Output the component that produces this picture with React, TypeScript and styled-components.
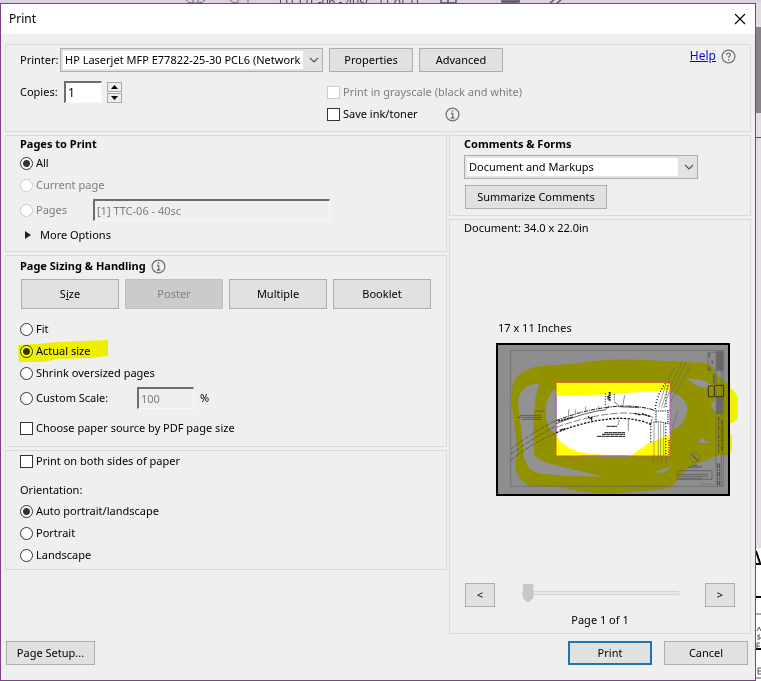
import React from "react";
import styled, { createGlobalStyle, css } from "styled-components";

const GlobalStyle = createGlobalStyle`
  * { box-sizing: border-box; }
  body {
    margin: 0;
    background: #e6dfe8;
    color: #000;
    font: 11px/16px "Noto Sans", "Open Sans", sans-serif;
  }
  button, input, select { font: inherit; color: inherit; margin: 0; }
`;

const Screen = styled.div`
  display: grid;
  grid-template-columns: minmax(0, 1fr) 5px;
  grid-template-rows: 3px auto;
  min-height: 100vh;
  overflow: hidden;
`;
const AppStrip = styled.div`
  grid-column: 1 / -1;
  display: flex;
  align-items: center;
  height: 3px;
  overflow: hidden;
  background: #ddd0e2;
  color: #554a5a;
  svg { flex: 1; min-width: 0; height: 3px; }
`;
const StripTitle = styled.span`
  font-size: 12px;
  white-space: nowrap;
`;
const StripLeft = styled.svg`max-width: 279px;`;
const AppEdge = styled.svg`
  width: 5px;
  height: 678px;
`;
const Dialog = styled.main`
  display: flex;
  flex-direction: column;
  border: 1px solid #7b4285;
  background: #efefef;
  min-height: 678px;
`;
const TitleBar = styled.header`
  display: flex;
  align-items: center;
  justify-content: space-between;
  height: 30px;
  padding: 0 8px;
  background: #fff;
`;
const Title = styled.h1`
  margin: 0;
  font-size: 12px;
  font-weight: 400;
`;
const CloseButton = styled.button`
  display: flex;
  align-items: center;
  justify-content: center;
  width: 14px;
  height: 14px;
  padding: 0;
  border: 0;
  background: none;
`;
const Body = styled.form`
  flex: 1;
  display: flex;
  flex-direction: column;
  gap: 3px;
  padding: 10px 3px 0;
  border-left: 1px solid #f6e6f8;
  border-right: 1px solid #f6e6f8;
`;
const Columns = styled.div`
  flex: 1;
  display: grid;
  grid-template-columns: minmax(0, 442fr) minmax(0, 302fr);
  gap: 2px;
`;
const Column = styled.div`
  display: flex;
  flex-direction: column;
  gap: 3px;
`;
const Group = styled.section<{ $bottom?: number; $grow?: boolean }>`
  display: flex;
  flex-direction: column;
  border: 1px solid #dadada;
  padding: 0 14px ${(p) => p.$bottom ?? 0}px;
  ${(p) => p.$grow && css`flex: 1;`}
`;
const Heading = styled.h2<{ $tall?: boolean }>`
  display: flex;
  align-items: center;
  gap: 5px;
  margin: 0;
  height: ${(p) => (p.$tall ? 20 : 16)}px;
  font-size: 11px;
  font-weight: 700;
`;
const PrinterRow = styled.div`
  display: flex;
  align-items: center;
  gap: 6px;
  padding-top: 3px;
`;
const HelpArea = styled.div`
  display: flex;
  align-items: center;
  gap: 5px;
  margin-left: auto;
  height: 16px;
  align-self: flex-start;
`;
const HelpLink = styled.a`
  color: #0a0ac0;
  font-size: 12px;
`;
const OptionsRow = styled.div`
  display: grid;
  grid-template-columns: 301px minmax(0, 1fr);
  padding: 9px 6px 6px 0;
`;
const CopiesRow = styled.div`
  display: flex;
  align-items: center;
  gap: 5px;
  height: 22px;
`;
const FieldLabel = styled.label`width: 39px; white-space: nowrap;`;
const Spinner = styled.div`
  display: grid;
  gap: 1px;
  width: 15px;
`;
const SpinButton = styled.button`
  display: flex;
  align-items: center;
  justify-content: center;
  height: 10px;
  padding: 0;
  border: 1px solid #a9a9a9;
  background: #ececec;
`;
const Row = styled.div<{ $size?: "short" | "tall" }>`
  position: relative;
  display: flex;
  align-items: center;
  height: ${(p) => (p.$size === "tall" ? 28 : p.$size === "short" ? 20 : 22)}px;
`;
const Choice = styled.label<{ $disabled?: boolean; $width?: number }>`
  display: flex;
  align-items: center;
  gap: 3px;
  white-space: nowrap;
  ${(p) => p.$width && css`width: ${p.$width}px;`}
  ${(p) => p.$disabled && css`color: #7d7d7d;`}
`;
const IndentedChoice = styled(Choice)`margin-left: 6px;`;
const Radio = styled.input.attrs({ type: "radio" })`
  appearance: none;
  flex: none;
  width: 13px;
  height: 13px;
  border: 1px solid #333;
  border-radius: 50%;
  background: #fff;
  &:checked { background: radial-gradient(circle, #333 0 3px, #fff 4px); }
  &:disabled { border-color: #ccc; }
`;
const Check = styled.input.attrs({ type: "checkbox" })`
  appearance: none;
  flex: none;
  width: 13px;
  height: 13px;
  border: 1px solid #333;
  background: #fff;
  &:checked { background: #333; }
  &:disabled { border-color: #ccc; }
`;
const TextBox = styled.input<{ $width: number }>`
  width: ${(p) => p.$width}px;
  height: 22px;
  padding: 0 2px 1px;
  border: 1px solid #f8f8f8;
  border-top: 2px solid #6d6d6d;
  border-left: 2px solid #6d6d6d;
  border-radius: 0;
  background: #fff;
  font-size: 12px;
  &:disabled { background: #efefef; color: #7d7d7d; font-size: 11px; }
`;
const Unit = styled.span`padding-left: 6px;`;
const Button = styled.button<{ $width: number; $height?: number; $primary?: boolean }>`
  width: ${(p) => p.$width}px;
  height: ${(p) => p.$height ?? 24}px;
  padding: 0;
  border: 1px solid #adadad;
  background: #e1e1e1;
  white-space: nowrap;
  ${(p) => p.$primary && css`border: 2px solid #1f74b3;`}
  &:disabled { background: #cbcbcb; border-color: #bfbfbf; color: #808080; }
`;
const SummarizeButton = styled(Button)`margin-left: 1px;`;
const SelectBox = styled.div<{ $width: number }>`
  position: relative;
  width: ${(p) => p.$width}px;
  height: 24px;
  svg { position: absolute; right: 4px; top: 9px; pointer-events: none; }
`;
const Select = styled.select`
  appearance: none;
  width: 100%;
  height: 24px;
  padding: 2px 19px 2px 2px;
  border: 1px solid #adadad;
  border-radius: 0;
  background: linear-gradient(#fff, #fff) content-box, #e3e3e3;
  text-indent: 2px;
`;
const PrinterSelect = styled(SelectBox)`margin-left: -5px;`;
const CommentTools = styled.div`
  display: flex;
  flex-direction: column;
  gap: 6px;
  padding-top: 3px;
`;
const Disclosure = styled.button`
  display: flex;
  align-items: center;
  gap: 9px;
  padding: 0 0 0 5px;
  border: 0;
  background: none;
`;
const SizeTabs = styled.div`
  display: flex;
  gap: 6px;
  padding: 3px 1px 9px;
`;
const SourceRow = styled(Row)`margin-top: 5px;`;
const OrientationLabel = styled(Row)`margin-top: 9px;`;
const Highlight = styled.svg`
  position: absolute;
  left: -2px;
  top: 0;
  mix-blend-mode: multiply;
  pointer-events: none;
`;
const Preview = styled.figure`
  display: flex;
  flex-direction: column;
  gap: 7px;
  margin: auto 0;
  padding: 0 20px 4px 32px;
  figcaption { padding-left: 2px; }
  svg { display: block; width: 234px; height: 153px; overflow: visible; }
`;
const Pager = styled.div`
  display: flex;
  align-items: center;
  justify-content: space-between;
  padding: 0 1px;
`;
const Slider = styled.input.attrs({ type: "range" })`
  appearance: none;
  width: 157px;
  height: 20px;
  margin: 0 0 4px;
  background: none;
  &::-webkit-slider-runnable-track {
    height: 4px;
    border: 1px solid #d3d3d3;
    background: #e9e9e9;
  }
  &::-webkit-slider-thumb {
    appearance: none;
    width: 11px;
    height: 19px;
    margin-top: -8px;
    background: #c8c8c8;
    clip-path: polygon(0 0, 100% 0, 100% 72%, 50% 100%, 0 72%);
  }
`;
const PageCount = styled.p`
  margin: 5px 0;
  text-align: center;
`;
const Footer = styled.footer`
  display: flex;
  gap: 12px;
  padding: 4px 3px 15px 1px;
`;
const Spacer = styled.span`flex: 1;`;

const Chevron = () => (
  <svg width="10" height="7" viewBox="0 0 10 7" fill="none" stroke="#555" strokeWidth="1.2"><path d="M1 1l4 4 4-4" /></svg>
);
const InfoIcon = () => (
  <svg width="15" height="15" viewBox="0 0 15 15" fill="none" stroke="#747474">
    <circle cx="7.5" cy="7.5" r="6.4" strokeWidth="1.3" />
    <path d="M6 6.5h1.7v4M5.8 11h3.6" strokeWidth="1.3" /><path d="M6.8 3.9h1.4" strokeWidth="1.6" />
  </svg>
);
const QuestionIcon = () => (
  <svg width="15" height="15" viewBox="0 0 15 15" fill="none" stroke="#747474">
    <circle cx="7.5" cy="7.5" r="6.4" strokeWidth="1.3" />
    <path d="M5.7 5.9c0-2.4 3.7-2.3 3.7 0 0 1.3-1.8 1.4-1.8 2.9M7.6 10v1.5" strokeWidth="1.3" />
  </svg>
);

const SheetDrawing = () => (
  <svg viewBox="48 69 702 459" role="img" aria-label="Sheet preview">
    <defs>
      <clipPath id="sheet"><rect x="48" y="69" width="702" height="459" /></clipPath>
      <clipPath id="printable"><rect x="228" y="187" width="343" height="221" /></clipPath>
    </defs>
    <path fill="#f2f200" d="M735 200q20 0 28 16 11 8 11 30v38q0 20-24 27h-15zM735 345h21v52l-21 12z" />
    <g clipPath="url(#sheet)">
      <rect x="48" y="69" width="702" height="459" fill="#8e8e8e" />
      <path fill="#929100" d="M96 210Q98 155 175 139L300 130Q400 112 490 120L670 128Q700 132 703 153L725 180 750 196V407L720 404 640 435Q600 460 585 490 570 512 500 512L390 522 310 516 230 500 150 499Q112 480 105 440L112 390 104 320 94 250z" />
      <g fill="#929292">
        <path d="M114 245Q118 195 178 190L165 240 160 320 162 400Q165 420 225 435L310 455 370 470 250 467 175 460Q132 445 130 395z" />
        <path d="M228 205Q195 230 197 285 200 335 228 338zM571 212Q622 235 622 265 617 320 571 332zM615 174l50 5q25 8 38 26l-45-3zM691 255l22-24 10 5v35l-20 2zM654 368l13-14 20 15zM520 456l56-17q-20 25-56 17z" />
      </g>
      <rect x="228" y="187" width="343" height="221" fill="#fff" />
      <g clipPath="url(#printable)" fill="#ff0">
        <path d="M228 187h343v24l-80 4-100 8-163 5zM228 345q25 50 110 57l90 6H228zM571 344l-65 25-54 39h119z" />
      </g>
      <path d="M228 228v122M571 215v130M300 408h150" stroke="#a870a8" strokeWidth="5" />
      <path d="M228 228v-41h343v28M228 350v58h72M450 408h121v-63" fill="none" stroke="#c86020" strokeWidth="3" />
      <g fill="none" stroke="#666" strokeWidth="2">
        <path d="M92 91h638v408H92zM708 91v408M724 91v408M684 97h24M684 150h24M684 97v53" />
        <path d="M92 388Q150 340 228 302M92 402Q155 357 228 318M92 420Q165 364 228 340" stroke="#444" strokeDasharray="14 4" />
        <path d="M564 178l18-35M571 200l36-76M571 222l48-96M571 245l64-112M577 325l17-55M520 408v24M533 408v25M545 408v23M558 408v20" />
        <path d="M111 292h74M120 286h63M125 298h59M165 273h30" stroke="#444" />
        <path d="M592 452h104v26H592zM596 463h90M596 469h88M596 475h70" stroke="#555" />
        <circle cx="645" cy="412" r="15" /><path d="M634 400l22 24M638 408l13 14M625 441h41M638 436h14" stroke="#555" strokeWidth="3" />
        <path d="M662 493h34" strokeDasharray="5 2" />
      </g>
      <path d="M709 94h21v58h-21zM709 232h20v50h-20z" fill="#686868" />
      <path d="M685 198h18v32h-18zM706 196h25v34h-25" fill="none" stroke="#343400" strokeWidth="3" />
      <path d="M697 122v12M688 142v10M702 190v-30M688 100v12" stroke="#555" strokeWidth="6" strokeDasharray="4 2" />
      <path d="M716 290v110M726 300v96M713 430v68M719 430v68" stroke="#4a4a10" strokeWidth="3" strokeDasharray="14 4 5 3" />
      <g clipPath="url(#printable)" fill="none" stroke="#111">
        <path d="M228 302Q330 262 430 258 480 258 522 270" strokeWidth="3" strokeDasharray="12 3 4 3" />
        <path d="M228 311Q330 272 375 270L388 258M404 246l14 14 60 3" strokeWidth="2" />
        <path d="M228 338Q340 294 430 295 480 298 515 314" strokeWidth="4" strokeDasharray="7 4" />
        <path d="M228 322Q340 282 430 279 480 279 520 292" stroke="#444" strokeWidth="2" strokeDasharray="22 6" />
        <path d="M234 304l45-13M242 330l14-4M324 289l6 7 5-4v10M464 280l18 5M486 281l26 9" strokeWidth="4" strokeDasharray="7 2" />
        <path d="M286 268v13M317 260v12M356 259v10M434 226l-5 28M266 268v20M445 298v35" stroke="#555" strokeWidth="2" />
        <path d="M376 220v42M403 222v25" strokeWidth="3" strokeDasharray="3 5" />
        <path d="M389 216v28M385 228v10" strokeWidth="6" strokeDasharray="5 2" />
        <path d="M380 319h31M373 338h62M366 343h69M351 349h84" strokeWidth="3" strokeDasharray="12 1" />
        <path d="M414 316l4-17" stroke="#555" strokeWidth="2" />
        <path d="M526 267Q530 225 556 190M566 187Q555 230 559 265M512 310v60M557 310v98" strokeWidth="4" strokeDasharray="3 6" />
        <path d="M522 408V310M535 408V310M542 408V310M551 408V310M536 263l23-75M545 263l20-65M551 264l19-55" stroke="#777" strokeWidth="2" />
        <path d="M520 271q20 4 50 0M520 307q20-4 50 5M528 275v35M564 275v35M516 298l-6 20M567 360v45" strokeWidth="3" strokeDasharray="4 3" />
      </g>
      <rect x="51" y="72" width="696" height="453" fill="none" stroke="#000" strokeWidth="6" />
    </g>
  </svg>
);

export default function App() {
  return (
    <>
      <GlobalStyle />
      <Screen>
        <AppStrip>
          <StripLeft viewBox="0 0 279 3" fill="none" stroke="#6f6475" preserveAspectRatio="xMinYMin">
            <path d="M186 0q2 3 6 3h6q5 0 7-3M193 0v3M198 0v3M230 0q2 3 7 3M248 0v3M238 0v3" />
          </StripLeft>
          <StripTitle>[1] TTC-06 - 40sc&nbsp;&nbsp; (1 of 1)</StripTitle>
          <svg viewBox="0 0 337 3" fill="none" stroke="#5f5465" preserveAspectRatio="xMinYMin">
            <path d="M22 0v3h15V0M29 0v3M83 0v2h17V0M84 1h16M131 3l4-3M138 3l4-3" strokeWidth="1.5" />
          </svg>
        </AppStrip>
        <Dialog>
          <TitleBar>
            <Title>Print</Title>
            <CloseButton type="button" aria-label="Close">
              <svg width="12" height="12" viewBox="0 0 12 12" stroke="#000" strokeWidth="1.1"><path d="M1 1l10 10M11 1L1 11" /></svg>
            </CloseButton>
          </TitleBar>
          <Body onSubmit={(e) => e.preventDefault()}>
            <Group>
              <PrinterRow>
                <FieldLabel htmlFor="printer">Printer:</FieldLabel>
                <PrinterSelect $width={263}>
                  <Select id="printer"><option>HP Laserjet MFP E77822-25-30 PCL6 (Network</option></Select>
                  <Chevron />
                </PrinterSelect>
                <Button type="button" $width={84}>Properties</Button>
                <Button type="button" $width={84}>Advanced</Button>
                <HelpArea><HelpLink href="#help">Help</HelpLink><QuestionIcon /></HelpArea>
              </PrinterRow>
              <OptionsRow>
                <CopiesRow>
                  <FieldLabel htmlFor="copies">Copies:</FieldLabel>
                  <TextBox id="copies" $width={38} defaultValue="1" />
                  <Spinner>
                    <SpinButton type="button" aria-label="More copies"><svg width="7" height="4" viewBox="0 0 7 4"><path d="M0 4l3.5-4L7 4z" /></svg></SpinButton>
                    <SpinButton type="button" aria-label="Fewer copies"><svg width="7" height="4" viewBox="0 0 7 4"><path d="M0 0l3.5 4L7 0z" /></svg></SpinButton>
                  </Spinner>
                </CopiesRow>
                <div>
                  <Row><IndentedChoice $disabled><Check disabled />Print in grayscale (black and white)</IndentedChoice></Row>
                  <Row><IndentedChoice $width={118}><Check />Save ink/toner</IndentedChoice><InfoIcon /></Row>
                </div>
              </OptionsRow>
            </Group>
            <Columns>
              <Column>
                <Group $bottom={5}>
                  <Heading>Pages to Print</Heading>
                  <Row><Choice><Radio name="pages" defaultChecked />All</Choice></Row>
                  <Row><Choice $disabled><Radio name="pages" disabled />Current page</Choice></Row>
                  <Row $size="tall">
                    <Choice $disabled $width={73}><Radio name="pages" disabled />Pages</Choice>
                    <TextBox $width={237} disabled aria-label="Page range" defaultValue="[1] TTC-06 - 40sc" />
                  </Row>
                  <Row>
                    <Disclosure type="button"><svg width="6" height="8" viewBox="0 0 6 8"><path d="M0 0l6 4-6 4z" fill="#222" /></svg>More Options</Disclosure>
                  </Row>
                </Group>
                <Group $bottom={7}>
                  <Heading $tall>Page Sizing &amp; Handling <InfoIcon /></Heading>
                  <SizeTabs>
                    <Button type="button" $width={98} $height={30}>S<u>i</u>ze</Button>
                    <Button type="button" $width={98} $height={30} disabled>Poster</Button>
                    <Button type="button" $width={98} $height={30}>Multiple</Button>
                    <Button type="button" $width={98} $height={30}>Booklet</Button>
                  </SizeTabs>
                  <Row><Choice><Radio name="scale" />Fit</Choice></Row>
                  <Row>
                    <Choice><Radio name="scale" defaultChecked />Actual size</Choice>
                    <Highlight width="90" height="22" viewBox="0 0 90 22"><path d="M0 5l18-1 22-2L90 0v16l-18 2-35 1-10 3H1z" fill="#ff0" /></Highlight>
                  </Row>
                  <Row><Choice><Radio name="scale" />Shrink oversized pages</Choice></Row>
                  <Row $size="tall">
                    <Choice $width={117}><Radio name="scale" />Custom Scale:</Choice>
                    <TextBox $width={57} disabled aria-label="Scale percentage" defaultValue="100" />
                    <Unit>%</Unit>
                  </Row>
                  <SourceRow><Choice><Check />Choose paper source by PDF page size</Choice></SourceRow>
                </Group>
                <Group $bottom={3}>
                  <Row $size="short"><Choice><Check />Print on both sides of paper</Choice></Row>
                  <OrientationLabel $size="short">Orientation:</OrientationLabel>
                  <Row><Choice><Radio name="orientation" defaultChecked />Auto portrait/landscape</Choice></Row>
                  <Row><Choice><Radio name="orientation" />Portrait</Choice></Row>
                  <Row><Choice><Radio name="orientation" />Landscape</Choice></Row>
                </Group>
              </Column>
              <Column>
                <Group $bottom={6}>
                  <Heading as="label" htmlFor="comments">Comments &amp; Forms</Heading>
                  <CommentTools>
                    <SelectBox $width={234}>
                      <Select id="comments"><option>Document and Markups</option></Select>
                      <Chevron />
                    </SelectBox>
                    <SummarizeButton type="button" $width={142}>Summarize Comments</SummarizeButton>
                  </CommentTools>
                </Group>
                <Group $grow>
                  <span>Document: 34.0 x 22.0in</span>
                  <Preview>
                    <figcaption>17 x 11 Inches</figcaption>
                    <SheetDrawing />
                  </Preview>
                  <Pager>
                    <Button type="button" $width={30} aria-label="Previous page">&lt;</Button>
                    <Slider aria-label="Page" min={1} max={2} defaultValue={1} />
                    <Button type="button" $width={30} aria-label="Next page">&gt;</Button>
                  </Pager>
                  <PageCount>Page 1 of 1</PageCount>
                </Group>
              </Column>
            </Columns>
            <Footer>
              <Button type="button" $width={89}>Page Setup...</Button>
              <Spacer />
              <Button type="submit" $width={84} $primary>Print</Button>
              <Button type="button" $width={84}>Cancel</Button>
            </Footer>
          </Body>
        </Dialog>
        <AppEdge viewBox="0 0 5 678" aria-hidden="true">
          <path fill="#e2dce3" d="M0 0h5v678H0z" />
          <path fill="#87838a" d="M0 24h5v86H0z" />
          <path fill="#fff" d="M0 545h5v133H0z" />
          <path stroke="#555" d="M0 134.5h5M0 611h5M0 675h5" />
          <path stroke="#000" strokeWidth="2" d="M0 561h5M0 594h5M0 646h5M0 548l4 12" />
          <path stroke="#555" d="M1 628l2-4 2 4M4 632H2v2h2v2H1M1 640h3M1 643h3M1 640v6M2 665h3M2 668h3M2 665v6h3" fill="none" />
        </AppEdge>
      </Screen>
    </>
  );
}
